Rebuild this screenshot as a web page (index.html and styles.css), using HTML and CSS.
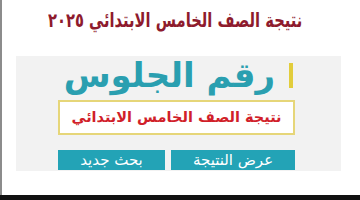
FILE: index.html
```html
<!DOCTYPE html>
<html lang="ar" dir="rtl">
<head>
<meta charset="utf-8">
<link rel="stylesheet" href="styles.css">
</head>
<body>
<div class="page">
  <div class="title-row"><h1 class="title">نتيجة الصف الخامس الابتدائي ٢٠٢٥</h1></div>
  <div class="panel">
    <div class="inner">
      <div class="heading"><span class="bar"></span><span class="heading-text">رقم الجلوس</span></div>
      <div class="field">نتيجة الصف الخامس الابتدائي</div>
      <div class="buttons">
        <div class="btn btn-wide">عرض النتيجة</div>
        <div class="btn btn-narrow">بحث جديد</div>
      </div>
    </div>
  </div>
</div>
<div class="footer"></div>
</body>
</html>
```
FILE: styles.css
```css
html, body {
  margin: 0;
  padding: 0;
  background: #ffffff;
  width: 360px;
  height: 200px;
  overflow: hidden;
  font-family: "DejaVu Sans", "Noto Sans", sans-serif;
}
.page {
  box-sizing: border-box;
  width: 360px;
  height: 195px;
  border-left: 2px solid #8c8c8c;
  padding-top: 8px;
}
.title-row {
  display: flex;
  justify-content: center;
  height: 26px;
  padding-left: 4px;
  padding-right: 16px;
}
.title {
  margin: 0;
  line-height: 26px;
  font-size: 16px;
  font-weight: bold;
  color: #8e1b2d;
  white-space: nowrap;
  transform: scale(0.92, 1.25);
}
.panel {
  box-sizing: border-box;
  margin-top: 22px;
  margin-right: 19px;
  margin-left: 14px;
  width: 325px;
  height: 115px;
  background: #f2f2f2;
  padding-top: 6px;
  padding-right: 46px;
}
.inner {
  width: 237px;
}
.heading {
  display: flex;
  align-items: center;
  height: 26px;
  gap: 14px;
  padding-right: 2px;
}
.bar {
  width: 4px;
  height: 25px;
  background: #e2cd3c;
  flex: none;
}
.heading-text {
  font-size: 34px;
  font-weight: bold;
  color: #2a9fb0;
  line-height: 26px;
  white-space: nowrap;
}
.field {
  box-sizing: border-box;
  margin-top: 12px;
  height: 35px;
  background: #ffffff;
  border: 2px solid #e6d679;
  color: #d11f2a;
  font-size: 14.5px;
  font-weight: bold;
  text-align: center;
  line-height: 31px;
  white-space: nowrap;
}
.buttons {
  display: flex;
  gap: 6px;
  margin-top: 15px;
}
.btn {
  height: 20px;
  background: #23a3b6;
  color: #ffffff;
  font-size: 15px;
  line-height: 20px;
  text-align: center;
  white-space: nowrap;
}
.btn-wide {
  width: 124px;
}
.btn-narrow {
  width: 107px;
}
.footer {
  height: 5px;
  background: #111111;
}
```
